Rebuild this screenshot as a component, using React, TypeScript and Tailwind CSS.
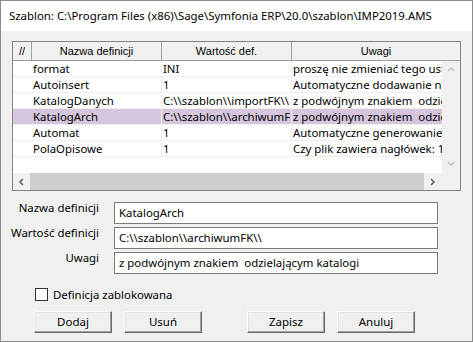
import React from 'react';

const rows = [
  { name: 'format', value: 'INI', note: 'proszę nie zmieniać tego ustawienia' },
  { name: 'Autoinsert', value: '1', note: 'Automatyczne dodawanie nowych pozycji' },
  { name: 'KatalogDanych', value: 'C:\\\\szablon\\\\importFK\\\\', note: 'z podwójnym znakiem  odzielającym katalogi' },
  { name: 'KatalogArch', value: 'C:\\\\szablon\\\\archiwumFK\\\\', note: 'z podwójnym znakiem  odzielającym katalogi', selected: true },
  { name: 'Automat', value: '1', note: 'Automatyczne generowanie dokumentów' },
  { name: 'PolaOpisowe', value: '1', note: 'Czy plik zawiera nagłówek: 1 - tak' },
];

const ui = { fontFamily: '"Noto Sans", "Open Sans", sans-serif' };
const hdr = { fontFamily: '"Liberation Sans", Arial, sans-serif' };

function Chevron({ dir, color }: { dir: 'up' | 'down' | 'left' | 'right'; color: string }) {
  const d = {
    up: 'M1 5 L4 2 L7 5',
    down: 'M1 2 L4 5 L7 2',
    left: 'M5 1 L2 4 L5 7',
    right: 'M2 1 L5 4 L2 7',
  }[dir];
  return (
    <svg width="8" height="8" viewBox="0 0 8 8">
      <path d={d} fill="none" stroke={color} strokeWidth="1.6" />
    </svg>
  );
}

function Field({ label, value }: { label: string; value: string }) {
  return (
    <div className="flex items-start">
      <div className="w-[99px] text-right leading-[16px] -mt-[2px] pr-[1px]">{label}</div>
      <div className="ml-[14px] w-[324px] h-[22px] bg-white border border-[#7a7a7a] px-[4px] leading-[20px] whitespace-pre overflow-hidden">
        {value}
      </div>
    </div>
  );
}

function Btn({ children }: { children: React.ReactNode }) {
  return (
    <button className="w-[78px] h-[22px] bg-[#f0f0f0] border border-t-white border-l-white border-r-[#696969] border-b-[#696969] shadow-[inset_-1px_-1px_0_#a0a0a0,inset_1px_1px_0_#e3e3e3] text-[11.5px] leading-[18px] text-black">
      {children}
    </button>
  );
}

export default function App() {
  return (
    <div className="w-[473px] h-[342px] bg-[#f0f0f0] border border-[#8c8c8c] text-[11.4px] text-black flex flex-col overflow-hidden" style={ui}>
      <div className="h-[30px] bg-white flex items-center pl-[8px] shrink-0 whitespace-nowrap">
        Szablon: C:\Program Files (x86)\Sage\Symfonia ERP\20.0\szablon\IMP2019.AMS
      </div>

      <div className="ml-[11px] mt-[10px] w-[449px] h-[150px] border border-[#828282] bg-[#f0f0f0] flex flex-col">
        <div className="h-[19px] flex border-b border-[#a0a0a0] bg-[#f0f0f0] text-[11px] leading-[18px] shrink-0" style={hdr}>
          <div className="w-[19px] border-r border-[#a0a0a0] text-center">//</div>
          <div className="w-[130px] border-r border-[#a0a0a0] text-center">Nazwa definicji</div>
          <div className="w-[130px] border-r border-[#a0a0a0] text-center">Wartość def.</div>
          <div className="flex-1 text-center">Uwagi</div>
        </div>
        <div className="flex flex-1 min-h-0">
          <div className="w-[429px] bg-white overflow-hidden">
            {rows.map((r) => (
              <div
                key={r.name}
                className={`h-[16px] flex border-b border-[#f0f0f0] leading-[15px] whitespace-pre ${r.selected ? 'bg-[#d5c6de]' : ''}`}
              >
                <div className="w-[19px] shrink-0" />
                <div className="w-[130px] shrink-0 border-r border-[#f0f0f0] pl-[1px] overflow-hidden">{r.name}</div>
                <div className="w-[130px] shrink-0 border-r border-[#f0f0f0] pl-[1px] overflow-hidden">{r.value}</div>
                <div className="w-[150px] shrink-0 pl-[1px] overflow-hidden">{r.note}</div>
              </div>
            ))}
          </div>
          <div className="flex-1 flex flex-col items-center justify-between py-[5px]">
            <Chevron dir="up" color="#c4c4c4" />
            <Chevron dir="down" color="#c4c4c4" />
          </div>
        </div>
        <div className="h-[17px] flex items-center shrink-0">
          <div className="w-[17px] flex justify-center"><Chevron dir="left" color="#606060" /></div>
          <div className="w-[394px] h-[17px] bg-[#cdcdcd]" />
          <div className="w-[17px] flex justify-center"><Chevron dir="right" color="#606060" /></div>
        </div>
      </div>

      <div className="mt-[11px] flex flex-col gap-[3px]">
        <Field label="Nazwa definicji" value="KatalogArch" />
        <Field label="Wartość definicji" value="C:\\szablon\\archiwumFK\\" />
        <Field label="Uwagi" value="z podwójnym znakiem  odzielającym katalogi" />
      </div>

      <label className="mt-[12px] ml-[34px] flex items-center gap-[5px]">
        <span className="w-[13px] h-[13px] bg-white border border-[#333]" />
        <span>Definicja zablokowana</span>
      </label>

      <div className="mt-[8px] ml-[33px] flex">
        <Btn>Dodaj</Btn>
        <div className="ml-[12px]"><Btn>Usuń</Btn></div>
        <div className="ml-[45px]"><Btn>Zapisz</Btn></div>
        <div className="ml-[12px]"><Btn>Anuluj</Btn></div>
      </div>
    </div>
  );
}
